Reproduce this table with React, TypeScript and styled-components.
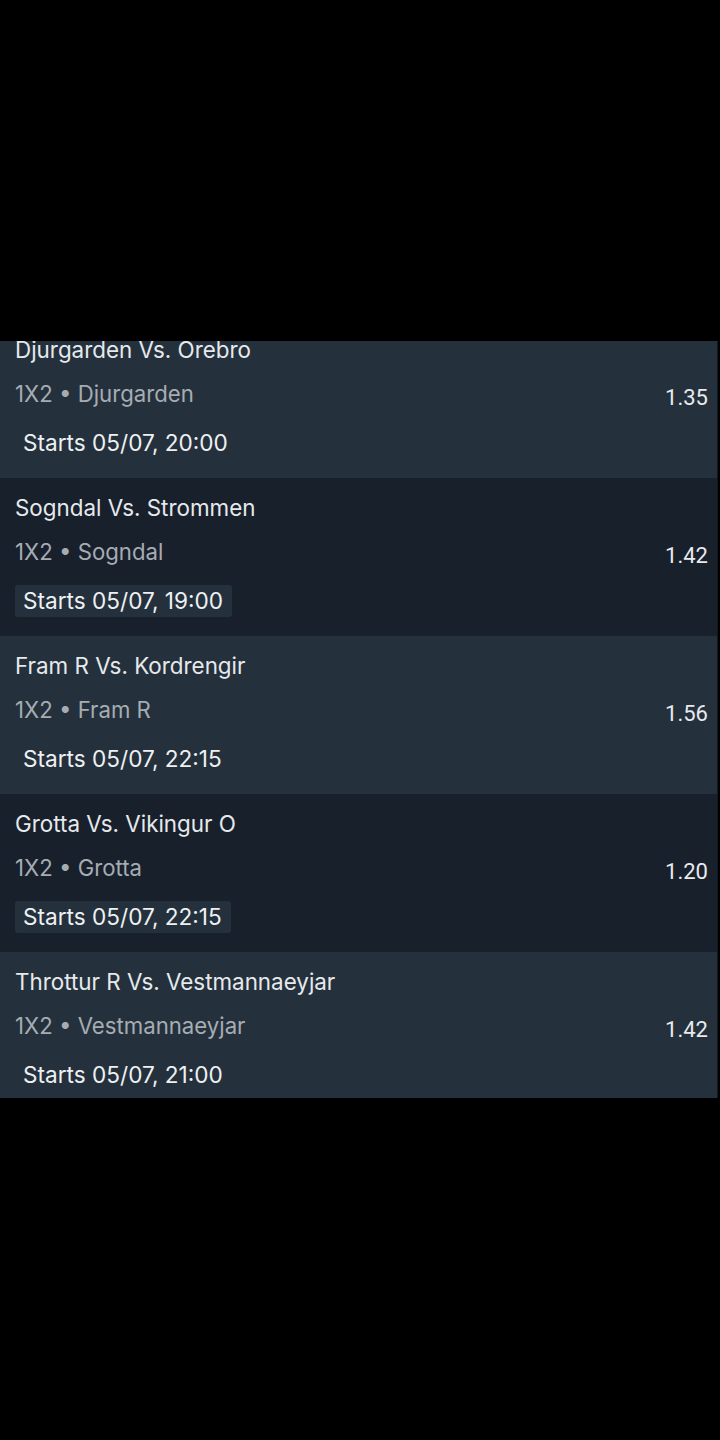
import { useLayoutEffect, useRef } from "react";
import styled, { createGlobalStyle } from "styled-components";

const GlobalStyle = createGlobalStyle`
  html, body {
    margin: 0;
    padding: 0;
    background: #000;
  }
  body {
    font-family: Inter, "Noto Sans", sans-serif;
    -webkit-font-smoothing: antialiased;
  }
`;

const lightRow = "#24313c";
const darkRow = "#18202b";

const Screen = styled.div`
  width: 720px;
  height: 1440px;
  padding-top: 341px;
  box-sizing: border-box;
  background: #000;
`;
const List = styled.div`
  width: 718px;
  height: 757px;
  overflow-y: auto;
  scrollbar-width: none;
  border-right: 1px solid #121920;
  box-sizing: border-box;
  &::-webkit-scrollbar {
    display: none;
  }
`;
type TRow = { $dark: boolean };
const Row = styled.div<TRow>`
  display: flex;
  align-items: center;
  justify-content: space-between;
  height: 158px;
  box-sizing: border-box;
  padding: 16px 9px 19px 15px;
  background: ${({ $dark }) => ($dark ? darkRow : lightRow)};
`;
const Info = styled.div`
  display: flex;
  flex-direction: column;
  align-items: flex-start;
`;
const Title = styled.p`
  margin: 0;
  font-size: 22.4px;
  line-height: 28px;
  color: #e6e9ec;
`;
const Market = styled.p`
  margin: 16px 0 0 0;
  font-size: 22.2px;
  line-height: 28px;
  color: #a6acb3;
`;
const Starts = styled.span<TRow>`
  margin-top: 19px;
  height: 32px;
  padding: 0 9px 0 8px;
  border-radius: 3px;
  font-size: 22.6px;
  line-height: 32px;
  color: #eef0f2;
  background: ${({ $dark }) => ($dark ? lightRow : "transparent")};
`;
const Odds = styled.span`
  font-family: Roboto, Inter, sans-serif;
  font-size: 22px;
  color: #e8eaed;
`;

const matches = [
  { title: "Djurgarden Vs. Orebro", pick: "Djurgarden", starts: "05/07, 20:00", odds: "1.35" },
  { title: "Sogndal Vs. Strommen", pick: "Sogndal", starts: "05/07, 19:00", odds: "1.42" },
  { title: "Fram R Vs. Kordrengir", pick: "Fram R", starts: "05/07, 22:15", odds: "1.56" },
  { title: "Grotta Vs. Vikingur O", pick: "Grotta", starts: "05/07, 22:15", odds: "1.20" },
  { title: "Throttur R Vs. Vestmannaeyjar", pick: "Vestmannaeyjar", starts: "05/07, 21:00", odds: "1.42" },
];

export default function App() {
  const listRef = useRef<HTMLDivElement>(null);
  useLayoutEffect(() => {
    if (listRef.current) listRef.current.scrollTop = 21;
  }, []);
  return (
    <>
      <GlobalStyle />
      <Screen>
        <List ref={listRef}>
          {matches.map((m, idx) => (
            <Row key={m.title} $dark={idx % 2 === 1}>
              <Info>
                <Title>{m.title}</Title>
                <Market>1X2 • {m.pick}</Market>
                <Starts $dark={idx % 2 === 1}>Starts {m.starts}</Starts>
              </Info>
              <Odds>{m.odds}</Odds>
            </Row>
          ))}
        </List>
      </Screen>
    </>
  );
}
